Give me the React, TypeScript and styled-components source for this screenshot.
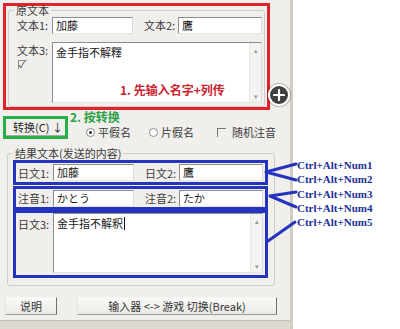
import React from 'react';
import styled, {createGlobalStyle} from 'styled-components';

const RED = '#e1222b';
const GREEN = '#2aae48';
const BLUE = '#2534bf';
const NAVY = '#22309a';
const FACE = '#f0efeb';

const GlobalStyle = createGlobalStyle`
  html, body {
    margin: 0;
    padding: 0;
    background: #fff;
  }
  * {
    box-sizing: border-box;
  }
`;

const hotkeys = ['Ctrl+Alt+Num1', 'Ctrl+Alt+Num2', 'Ctrl+Alt+Num3', 'Ctrl+Alt+Num4', 'Ctrl+Alt+Num5'];

const App = () => (
  <>
    <GlobalStyle />
    <Page>
      <Dialog>
        <RedBox>
          <GroupBox $height={101}>
            <Caption>原文本</Caption>
            <Row>
              <Label>文本1:</Label>
              <Field $width={81}>加藤</Field>
              <Label $width={34} $gap={11}>文本2:</Label>
              <Field $width={84}>鷹</Field>
            </Row>
            <Row $top={8}>
              <LabelCol>
                <Label>文本3:</Label>
                <Check>✓</Check>
              </LabelCol>
              <Memo $height={61}>
                <MemoText>金手指不解釋</MemoText>
                <ScrollBar>
                  <span>▴</span>
                  <span>▾</span>
                </ScrollBar>
                <RedNote>1. 先输入名字+列传</RedNote>
              </Memo>
            </Row>
          </GroupBox>
        </RedBox>

        <MidRow>
          <GreenBox>
            <ConvertButton>转换(C) ↓</ConvertButton>
          </GreenBox>
          <MidRight>
            <GreenNote>2. 按转换</GreenNote>
            <Options>
              <Option>
                <Radio $checked />
                平假名
              </Option>
              <Option>
                <Radio />
                片假名
              </Option>
              <Option>
                <Box />
                随机注音
              </Option>
            </Options>
          </MidRight>
        </MidRow>

        <ResultGroup>
          <Caption>结果文本(发送的内容)</Caption>
          <BlueBox $height={25}>
            <Label>日文1:</Label>
            <Field $width={81}>加藤</Field>
            <Label $width={34} $gap={11}>日文2:</Label>
            <Field $width={84}>鷹</Field>
          </BlueBox>
          <BlueBox $height={24} $top={1}>
            <Label>注音1:</Label>
            <Field $width={81}>かとう</Field>
            <Label $width={34} $gap={11}>注音2:</Label>
            <Field $width={84}>たか</Field>
          </BlueBox>
          <BlueBox $height={68} $align="flex-start">
            <Label $top={3}>日文3:</Label>
            <Memo $height={60}>
              <MemoText>
                金手指不解釈<Caret />
              </MemoText>
              <ScrollBar>
                <span>▴</span>
                <span>▾</span>
              </ScrollBar>
            </Memo>
          </BlueBox>
        </ResultGroup>

        <ButtonRow>
          <Button $width={52}>说明</Button>
          <Button $width={200} $gap={20}>
            输入器 &lt;-&gt; 游戏 切换(Break)
          </Button>
        </ButtonRow>

        <BottomStrip />

        <PlusBadge>
          <svg width="12" height="12" viewBox="0 0 12 12">
            <path d="M6 1v10M1 6h10" stroke="#fff" strokeWidth="2.2" strokeLinecap="round" />
          </svg>
        </PlusBadge>
      </Dialog>

      <Notes>
        {hotkeys.map((k) => (
          <Hotkey key={k}>{k}</Hotkey>
        ))}
      </Notes>

      <Arrows width="400" height="329" viewBox="0 0 400 329">
        <g stroke={BLUE} strokeWidth="3" strokeLinecap="round" fill="none">
          <path d="M266 172L296 164M266 172L296 180" />
          <path d="M270 196L296 192M270 196L296 207" />
          <path d="M268 241L295 222" />
        </g>
      </Arrows>
    </Page>
  </>
);

const Page = styled.div`
  position: relative;
  display: flex;
  width: 400px;
  height: 329px;
  overflow: hidden;
  font-family: 'Noto Sans CJK SC', 'Noto Sans', sans-serif;
  font-size: 11px;
  color: #3a3a3a;
`;

const Dialog = styled.div`
  position: relative;
  display: flex;
  flex-direction: column;
  width: 293px;
  height: 329px;
  padding: 3px 0 0 3px;
  background: ${FACE};
  border-right: 3px solid #d2cdc1;
`;

const RedBox = styled.div`
  display: flex;
  flex-direction: column;
  width: 267px;
  height: 107px;
  padding: 4px 2px 0;
  border: 3px solid ${RED};
`;

const GroupBox = styled.div<{$height: number}>`
  position: relative;
  height: ${({$height}) => $height}px;
  padding: 6px 0 0 8px;
  border: 1px solid #cfcdc5;
  border-radius: 3px;
`;

const Caption = styled.div`
  position: absolute;
  top: -7px;
  left: 5px;
  padding: 0 2px;
  line-height: 13px;
  color: #3a3a3a;
  background: linear-gradient(to bottom, transparent 0 3px, ${FACE} 3px);
`;

const Row = styled.div<{$top?: number}>`
  display: flex;
  align-items: flex-start;
  margin-top: ${({$top = 0}) => $top}px;
`;

const Label = styled.div<{$width?: number; $gap?: number; $top?: number}>`
  width: ${({$width = 35}) => $width}px;
  margin-left: ${({$gap = 0}) => $gap}px;
  margin-top: ${({$top = 0}) => $top}px;
  line-height: 16px;
  white-space: nowrap;
`;

const LabelCol = styled.div`
  display: flex;
  flex-direction: column;
  width: 35px;
`;

const Check = styled.div`
  width: 9px;
  height: 9px;
  margin: 2px 0 0 1px;
  border-left: 1px solid #888;
  border-top: 1px solid #888;
  font-size: 9px;
  line-height: 8px;
  color: #333;
`;

const Field = styled.div<{$width: number}>`
  width: ${({$width}) => $width}px;
  height: 17px;
  padding-left: 3px;
  line-height: 15px;
  background: #fff;
  border: 1px solid;
  border-color: #8d8d8d #dcdcdc #e4e4e4 #8d8d8d;
  color: #1a1a1a;
  white-space: nowrap;
  overflow: hidden;
`;

const Memo = styled.div<{$height: number}>`
  position: relative;
  display: flex;
  width: 210px;
  height: ${({$height}) => $height}px;
  background: #fff;
  border: 1px solid;
  border-color: #8d8d8d #dcdcdc #e4e4e4 #8d8d8d;
`;

const MemoText = styled.div`
  flex: 1;
  padding: 2px 3px;
  line-height: 15px;
  color: #1a1a1a;
`;

const Caret = styled.span`
  display: inline-block;
  width: 1px;
  height: 13px;
  margin-left: 1px;
  vertical-align: -2px;
  background: #111;
`;

const ScrollBar = styled.div`
  display: flex;
  flex-direction: column;
  justify-content: space-between;
  width: 12px;
  padding: 3px 0 2px;
  background: #f3f3f1;
  border-left: 1px solid #e6e6e3;
  font-size: 7px;
  line-height: 8px;
  text-align: center;
  color: #999;
`;

const RedNote = styled.div`
  position: absolute;
  left: 67px;
  top: 38px;
  font-size: 12px;
  font-weight: 700;
  color: #c9232d;
  white-space: nowrap;
`;

const MidRow = styled.div`
  display: flex;
  align-items: flex-start;
  height: 43px;
`;

const GreenBox = styled.div`
  width: 65px;
  height: 23px;
  margin-top: 6px;
  border: 3px solid ${GREEN};
`;

const ConvertButton = styled.div`
  height: 100%;
  padding-left: 7px;
  line-height: 16px;
  color: #2a2a2a;
  border-bottom: 1px solid #a9a9a4;
  white-space: nowrap;
`;

const MidRight = styled.div`
  display: flex;
  flex-direction: column;
  margin: 0 0 0 2px;
`;

const GreenNote = styled.div`
  height: 14px;
  line-height: 14px;
  font-size: 12px;
  font-weight: 700;
  color: #2a9f45;
`;

const Options = styled.div`
  display: flex;
  align-items: center;
  gap: 18px;
  margin-top: 2px;
  padding-left: 16px;
  line-height: 13px;
`;

const Option = styled.div`
  display: flex;
  align-items: center;
  gap: 3px;

  &:last-child {
    margin-left: 5px;
  }
`;

const Radio = styled.span<{$checked?: boolean}>`
  display: inline-flex;
  align-items: center;
  justify-content: center;
  width: 9px;
  height: 9px;
  border-radius: 50%;
  border: 1px solid #8a8a8a;
  background: #fff;

  &::after {
    content: '';
    width: 3px;
    height: 3px;
    border-radius: 50%;
    background: ${({$checked}) => ($checked ? '#222' : 'transparent')};
  }
`;

const Box = styled.span`
  width: 9px;
  height: 9px;
  margin-right: 3px;
  border-left: 1px solid #777;
  border-top: 1px solid #777;
`;

const ResultGroup = styled.div`
  position: relative;
  display: flex;
  flex-direction: column;
  width: 268px;
  height: 133px;
  margin: 0 0 0 4px;
  padding: 6px 0 0 5px;
  border: 1px solid #cfcdc5;
  border-radius: 3px;
`;

const BlueBox = styled.div<{$height: number; $top?: number; $align?: string}>`
  display: flex;
  align-items: ${({$align = 'center'}) => $align};
  width: 255px;
  height: ${({$height}) => $height}px;
  margin-top: ${({$top = 0}) => $top}px;
  padding-left: 2px;
  border: 3px solid ${BLUE};
`;

const ButtonRow = styled.div`
  display: flex;
  margin: 11px 0 0 2px;
`;

const Button = styled.div<{$width: number; $gap?: number}>`
  width: ${({$width}) => $width}px;
  height: 18px;
  margin-left: ${({$gap = 0}) => $gap}px;
  line-height: 16px;
  text-align: center;
  color: #333;
  background: linear-gradient(to bottom, #fafaf8, #ebeae6);
  border: 1px solid;
  border-color: #f6f6f4 #6f6f6f #9a9a96 #e2e2de;
  white-space: nowrap;
`;

const BottomStrip = styled.div`
  height: 9px;
  margin: auto 0 0 -3px;
  background: #dcd9d1;
  border-top: 1px solid #c4c0b6;
`;

const PlusBadge = styled.div`
  position: absolute;
  left: 268px;
  top: 84px;
  display: flex;
  align-items: center;
  justify-content: center;
  width: 22px;
  height: 22px;
  border-radius: 50%;
  background: #3f3f3f;
  border: 2px solid #fff;
  box-shadow: 0 0 1px 1px rgba(0, 0, 0, 0.25);
`;

const Notes = styled.div`
  display: flex;
  flex-direction: column;
  padding: 158px 0 0 4px;
`;

const Hotkey = styled.div`
  font-family: 'Liberation Serif', 'DejaVu Serif', serif;
  font-size: 11px;
  font-weight: 700;
  line-height: 14.25px;
  color: ${NAVY};
  white-space: nowrap;
`;

const Arrows = styled.svg`
  position: absolute;
  left: 0;
  top: 0;
  pointer-events: none;
`;

export default App;
